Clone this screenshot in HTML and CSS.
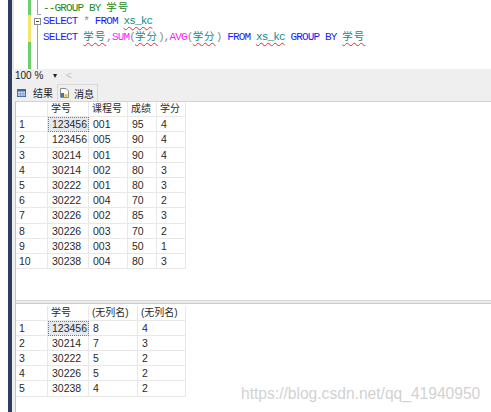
FILE: index.html
```html
<!DOCTYPE html>
<html>
<head>
<meta charset="utf-8">
<link rel="stylesheet" href="styles.css">
</head>
<body>
<div class="app">
  <div class="edge"></div>
  <div class="navy"></div>
  <div class="main">
    <div class="editor">
      <div class="gutter"></div>
      <div class="chg"><div class="g1"></div><div class="yl"></div><div class="g2"></div></div>
      <svg class="fold" width="11" height="69" viewBox="0 0 11 69">
        <path d="M6.5 0 V14.5 H10" fill="none" stroke="#a0a0a0" stroke-width="1"/>
        <rect x="3.5" y="18.5" width="6" height="6" fill="#fff" stroke="#8a8a8a" stroke-width="1"/>
        <path d="M5 21.5 H8" stroke="#444" stroke-width="1"/>
        <path d="M6.5 24.5 V69" stroke="#a0a0a0" stroke-width="1"/>
      </svg>
      <div class="code">
        <div class="ln"><span class="cm">--GROUP BY <span class="cj">学号</span></span></div>
        <div class="ln"><span class="kw">SELECT</span> <span class="op">*</span> <span class="kw">FROM</span> <span class="id sq">xs_kc</span></div>
        <div class="ln"><span class="kw">SELECT</span> <span class="id sq cj">学号</span><span class="op">,</span><span class="fn">SUM</span><span class="op">(</span><span class="id sq cj">学分</span><span class="op">),</span><span class="fn">AVG</span><span class="op">(</span><span class="id sq cj">学分</span><span class="op">)</span> <span class="kw">FROM</span> <span class="id sq">xs_kc</span> <span class="kw">GROUP BY</span> <span class="id sq cj">学号</span></div>
      </div>
    </div>
    <div class="zoombar"><span class="zoom">100 %</span><span class="dd">▾</span><span class="lt">&lt;</span></div>
    <div class="tabs">
      <div class="tab sel">
        <svg class="ico" width="9" height="8" viewBox="0 0 9 8">
          <rect x="0.5" y="0.5" width="8" height="7" fill="#dce7f5" stroke="#3a67ad"/>
          <rect x="0.5" y="0.5" width="8" height="2" fill="#3a67ad"/>
          <path d="M0.5 4.5 H8.5 M0.5 6 H8.5 M3.5 2.5 V7.5 M6 2.5 V7.5" stroke="#7fa0cf" stroke-width="0.8"/>
        </svg>
        <span>结果</span>
      </div>
      <div class="tab other">
        <svg class="ico" width="9" height="10" viewBox="0 0 9 10">
          <path d="M0.5 0.5 H6 L8.5 3 V9.5 H0.5 Z" fill="#fff" stroke="#8c8c8c"/>
          <rect x="1" y="5" width="3" height="4" fill="#3f73c0"/>
          <rect x="4.5" y="6" width="3" height="3" fill="#e8c44a"/>
        </svg>
        <span>消息</span>
      </div>
    </div>
    <div class="results">
      <div class="pane top">
        <div class="grid g1c">
          <div class="c"></div><div class="c h">学号</div><div class="c h">课程号</div><div class="c h">成绩</div><div class="c h">学分</div>
          <div class="c n">1</div><div class="c s">123456</div><div class="c">001</div><div class="c">95</div><div class="c">4</div>
          <div class="c n">2</div><div class="c">123456</div><div class="c">005</div><div class="c">90</div><div class="c">4</div>
          <div class="c n">3</div><div class="c">30214</div><div class="c">001</div><div class="c">90</div><div class="c">4</div>
          <div class="c n">4</div><div class="c">30214</div><div class="c">002</div><div class="c">80</div><div class="c">3</div>
          <div class="c n">5</div><div class="c">30222</div><div class="c">001</div><div class="c">80</div><div class="c">3</div>
          <div class="c n">6</div><div class="c">30222</div><div class="c">004</div><div class="c">70</div><div class="c">2</div>
          <div class="c n">7</div><div class="c">30226</div><div class="c">002</div><div class="c">85</div><div class="c">3</div>
          <div class="c n">8</div><div class="c">30226</div><div class="c">003</div><div class="c">70</div><div class="c">2</div>
          <div class="c n">9</div><div class="c">30238</div><div class="c">003</div><div class="c">50</div><div class="c">1</div>
          <div class="c n">10</div><div class="c">30238</div><div class="c">004</div><div class="c">80</div><div class="c">3</div>
        </div>
      </div>
      <div class="split"></div>
      <div class="pane bottom">
        <div class="grid g2c">
          <div class="c"></div><div class="c h">学号</div><div class="c h">(无列名)</div><div class="c h">(无列名)</div>
          <div class="c n">1</div><div class="c s">123456</div><div class="c">8</div><div class="c">4</div>
          <div class="c n">2</div><div class="c">30214</div><div class="c">7</div><div class="c">3</div>
          <div class="c n">3</div><div class="c">30222</div><div class="c">5</div><div class="c">2</div>
          <div class="c n">4</div><div class="c">30226</div><div class="c">5</div><div class="c">2</div>
          <div class="c n">5</div><div class="c">30238</div><div class="c">4</div><div class="c">2</div>
        </div>
      </div>
    </div>
  </div>
</div>
<div class="wm">https://blog.csdn.net/qq_41940950</div>
</body>
</html>
```

FILE: styles.css
```css
html, body {
  margin: 0;
  padding: 0;
}
body {
  width: 491px;
  height: 412px;
  overflow: hidden;
  background: #fff;
  position: relative;
  font-family: "Liberation Sans", "Noto Sans CJK SC", sans-serif;
  color: #1a1a1a;
}
.app {
  display: flex;
  height: 412px;
}
.edge {
  width: 8px;
  background: #fff;
}
.navy {
  width: 4px;
  background: #2d3d5e;
}
.main {
  flex: 1;
  min-width: 0;
  display: flex;
  flex-direction: column;
  background: #efefef;
}

/* editor */
.editor {
  height: 69px;
  flex: none;
  display: flex;
  background: #fff;
  overflow: hidden;
}
.gutter {
  width: 2px;
  background: #e4e4e4;
  margin-right: 14px;
}
.chg {
  width: 3px;
  display: flex;
  flex-direction: column;
}
.chg .g1 { height: 15px; background: #6bd06b; }
.chg .yl { height: 27px; background: #f3e56c; }
.chg .g2 { flex: 1; background: #6bd06b; }
.fold {
  display: block;
  flex: none;
}
.code {
  padding-left: 1px;
  font-family: "Liberation Mono", "Noto Sans CJK SC", monospace;
  font-size: 11px;
  letter-spacing: -0.85px;
  line-height: 14.3px;
}
.ln {
  height: 14.3px;
  white-space: pre;
}
.cj {
  font-family: "Noto Sans CJK SC", sans-serif;
  font-size: 10.5px;
  letter-spacing: 1px;
}
.cm { color: #1c8a1c; }
.kw { color: #1a1aff; }
.op { color: #8a8a8a; }
.fn { color: #ff1aff; }
.id { color: #138a8a; }
.sq {
  text-decoration: underline wavy #e03030;
  text-decoration-thickness: 1px;
  text-underline-offset: 2px;
}

/* zoom bar */
.zoombar {
  height: 12px;
  flex: none;
  display: flex;
  align-items: center;
  padding-left: 3px;
  font-size: 10px;
  color: #222;
}
.zoom { width: 38px; }
.dd {
  font-size: 8px;
  width: 13px;
}
.lt {
  color: #c4c4c4;
  font-size: 10px;
}

/* tabs */
.tabs {
  height: 20px;
  flex: none;
  display: flex;
  align-items: flex-end;
  padding-left: 3px;
  font-size: 10px;
  color: #1a1a1a;
}
.tab {
  height: 17px;
  display: flex;
  align-items: center;
  box-sizing: border-box;
  white-space: nowrap;
}
.tab.sel {
  width: 42px;
  padding-left: 2px;
  gap: 7px;
}
.tab.other {
  padding: 0 3px 0 2px;
  gap: 5px;
  border: 1px solid #d8d8d8;
  border-bottom: none;
}
.ico {
  display: block;
  flex: none;
}

/* results */
.results {
  flex: 1;
  margin-left: 3px;
  background: #fff;
  border-top: 1px solid #d2d2d2;
  border-left: 1px solid #c6c6c6;
  display: flex;
  flex-direction: column;
}
.pane.top {
  height: 198px;
}
.split {
  height: 2px;
  background: #ececec;
  border-top: 1px solid #d8d8d8;
  border-bottom: 1px solid #cdcdcd;
}
.pane.bottom {
  flex: 1;
  padding-top: 1.5px;
}
.grid {
  display: grid;
  grid-auto-rows: 15.2px;
  width: max-content;
}
.g1c { grid-template-columns: 32px 41px 39px 29px 29px; }
.g2c { grid-template-columns: 32px 41px 49px 48px; }
.c {
  box-sizing: border-box;
  border-right: 1px solid #e8e8e8;
  border-bottom: 1px solid #e8e8e8;
  padding-left: 4px;
  font-size: 10.5px;
  line-height: 14.5px;
  white-space: nowrap;
  overflow: hidden;
  color: #2a2a2a;
}
.c.n {
  padding-left: 3px;
}
.c.h {
  font-size: 10px;
  padding-left: 3px;
}
.c.s {
  background: #e4e9ef;
  outline: 1px dotted #7c7c7c;
  outline-offset: -1px;
}

/* watermark */
.wm {
  position: absolute;
  left: 241px;
  top: 385px;
  font-family: "Liberation Sans", sans-serif;
  font-size: 15.6px;
  line-height: 18px;
  color: #d2d2d2;
  white-space: nowrap;
}
```
